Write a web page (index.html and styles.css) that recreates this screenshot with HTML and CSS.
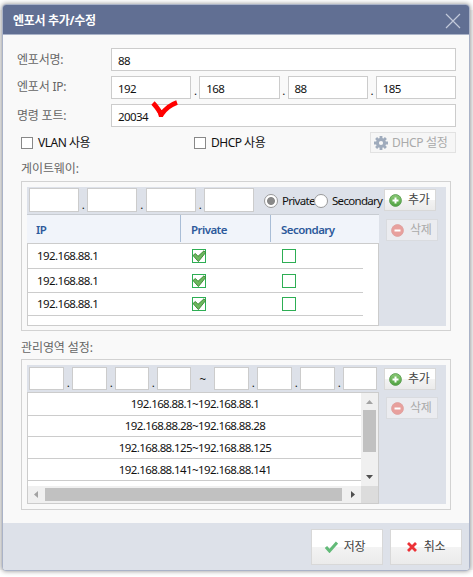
FILE: index.html
```html
<!DOCTYPE html>
<html lang="ko">
<head>
<meta charset="utf-8">
<title>엔포서 추가/수정</title>
<link rel="stylesheet" href="styles.css">
</head>
<body>
<svg class="defs" width="0" height="0" aria-hidden="true">
  <defs>
    <linearGradient id="gr" x1="0" y1="0" x2="0" y2="1"><stop offset="0" stop-color="#8cca78"/><stop offset="1" stop-color="#4fa23f"/></linearGradient>
    <symbol id="tick" viewBox="0 0 14 14"><path d="M1 6.500 3.400 4.500 6 7.300 12 1.800 13.600 3.600 6.400 12.600z" fill="#6cb85e" stroke="#37822f" stroke-width=".9"/></symbol>
    <symbol id="plus" viewBox="0 0 13 13"><circle cx="6.5" cy="6.5" r="5.9" fill="url(#gr)" stroke="#5a9d50" stroke-width=".9"/><path d="M6.5 3.5v6M3.5 6.5h6" stroke="#fff" stroke-width="2"/></symbol>
    <symbol id="minus" viewBox="0 0 13 13"><circle cx="6.5" cy="6.5" r="5.9" fill="#e8a09d" stroke="#dfa19f" stroke-width=".9"/><path d="M3.5 6.5h6" stroke="#fff" stroke-width="2"/></symbol>
  </defs>
</svg>
<div class="dialog">
  <header class="titlebar">
    <h1>엔포서 추가/수정</h1>
    <svg class="close" width="16" height="16" viewBox="0 0 16 16"><path d="M1 1 15 15M15 1 1 15" stroke="#c3c9da" stroke-width="1.2"/></svg>
  </header>
  <main>
    <div class="row"><label>엔포서명:</label><div class="field">88</div></div>
    <div class="row ip"><label>엔포서 IP:</label><div class="field">192</div><i>.</i><div class="field">168</div><i>.</i><div class="field">88</div><i>.</i><div class="field">185</div></div>
    <div class="row"><label>명령 포트:</label><div class="field">20034
      <svg class="mark" width="32" height="22" viewBox="0 0 32 22"><path d="M4 5Q8 9 12.500 16.500Q18 8 28 4.500" fill="none" stroke="#f00" stroke-width="4.600" stroke-linejoin="round"/><path d="M8 12h7l-1 7h-4z" fill="#f00"/></svg></div></div>
    <div class="options">
      <span class="opt"><b class="box"></b>VLAN 사용</span>
      <span class="opt"><b class="box"></b>DHCP 사용</span>
      <div class="button dhcp disabled"><svg width="14" height="14" viewBox="-7 -7 14 14"><circle r="3.600" fill="none" stroke="#9fabbc" stroke-width="3"/><path d="M0-7V-4M0 4V7M-7 0H-4M4 0H7M-4.900-4.900-3-3M3 3 4.900 4.900M4.900-4.900 3-3M-3 3-4.900 4.900" stroke="#9fabbc" stroke-width="2.800"/></svg>DHCP 설정</div>
    </div>
    <h2 class="first">게이트웨이:</h2>
    <section class="group">
      <div class="panel">
        <div class="left">
          <div class="entry gate"><div class="field"></div><i>.</i><div class="field"></div><i>.</i><div class="field"></div><i>.</i><div class="field"></div>
            <span class="radio first-radio"><b class="on"></b>Private</span><span class="radio"><b></b>Secondary</span></div>
          <div class="table">
            <div class="thead"><span>IP</span><span>Private</span><span>Secondary</span></div>
            <div class="tbody">
              <div class="tr"><span>192.168.88.1</span><b><svg width="14" height="14"><use href="#tick"/></svg></b><b></b></div>
              <div class="tr"><span>192.168.88.1</span><b><svg width="14" height="14"><use href="#tick"/></svg></b><b></b></div>
              <div class="tr"><span>192.168.88.1</span><b><svg width="14" height="14"><use href="#tick"/></svg></b><b></b></div>
            </div>
          </div>
        </div>
        <div class="side">
          <div class="button"><svg width="13" height="13"><use href="#plus"/></svg>추가</div>
          <div class="button disabled"><svg width="13" height="13"><use href="#minus"/></svg>삭제</div>
        </div>
      </div>
    </section>
    <h2 class="second">관리영역 설정:</h2>
    <section class="group area">
      <div class="panel">
        <div class="left">
          <div class="entry range"><div class="field"></div><i>.</i><div class="field"></div><i>.</i><div class="field"></div><i>.</i><div class="field"></div><em>~</em><div class="field"></div><i>.</i><div class="field"></div><i>.</i><div class="field"></div><i>.</i><div class="field"></div></div>
          <div class="list">
            <div class="items"><p>192.168.88.1~192.168.88.1</p><p>192.168.88.28~192.168.88.28</p><p>192.168.88.125~192.168.88.125</p><p>192.168.88.141~192.168.88.141</p></div>
            <div class="vbar"><svg width="17" height="17"><path d="M5 11h7L8.500 7z" fill="#a3a3a3"/></svg><div class="thumb"></div><svg width="17" height="17"><path d="M5 6h7L8.500 10z" fill="#505050"/></svg></div>
            <div class="hbar"><svg width="17" height="17"><path d="M10 5v7L6 8.500z" fill="#a3a3a3"/></svg><div class="thumb"></div><svg width="17" height="17"><path d="M7 5v7L11 8.500z" fill="#505050"/></svg></div>
            <div class="corner"></div>
          </div>
        </div>
        <div class="side">
          <div class="button"><svg width="13" height="13"><use href="#plus"/></svg>추가</div>
          <div class="button disabled"><svg width="13" height="13"><use href="#minus"/></svg>삭제</div>
        </div>
      </div>
    </section>
  </main>
  <footer>
    <div class="button big"><svg width="13" height="12" viewBox="0 0 13 12"><path d="M1 6 4.500 10 12 1.500" fill="none" stroke="#62ba78" stroke-width="3"/></svg>저장</div>
    <div class="button big cancel"><svg width="10" height="10" viewBox="0 0 10 10"><path d="M1 1 9 9M9 1 1 9" stroke="#ec3237" stroke-width="2.800"/></svg>취소</div>
  </footer>
</div>
</body>
</html>
```

FILE: styles.css
```css
* { box-sizing: border-box; }
body {
  margin: 0;
  padding: 4px 2px 0;
  width: 473px;
  height: 577px;
  overflow: hidden;
  background: linear-gradient(#fff 0 10px, #f3f3f3 10px 570px, #fff 570px);
  color: #111;
  font: 11.5px/16px "Noto Sans", "Noto Sans CJK KR", sans-serif;
  letter-spacing: -0.6px;
}
svg { display: block; flex: none; }
.defs { position: absolute; }
i, em { font-style: normal; }
.dialog {
  width: 468px;
  height: 567px;
  display: flex;
  flex-direction: column;
  border: 1px solid #aab3c8;
  border-radius: 4px;
  background: #f9f9f9;
  overflow: hidden;
  box-shadow: 0 0 5px rgba(0, 0, 0, .45);
}
.titlebar {
  height: 30px;
  flex: none;
  display: flex;
  align-items: center;
  justify-content: space-between;
  padding: 2px 8px 0 10px;
  background: #616f93;
  border-bottom: 1px solid #aab3c8;
}
h1 { margin: 0; color: #fff; font-size: 12px; font-weight: 700; letter-spacing: -0.3px; }
main { flex: 1; padding: 13px 13px 0 14px; }
.row { display: flex; height: 23px; margin-bottom: 5px; }
.row label { width: 94px; flex: none; color: #666; font-size: 12px; line-height: 24px; letter-spacing: -0.2px; }
.row.ip label { line-height: 22px; }
.field { flex: 1; min-width: 0; border: 1px solid #ccc; background: #fff; padding-left: 6px; line-height: 23px; position: relative; }
.row i { width: 8px; flex: none; text-align: center; line-height: 30px; }
.mark { position: absolute; left: 37px; top: -7px; }
.options { display: flex; height: 21px; padding-left: 4px; }
.opt { display: flex; width: 173px; align-items: center; gap: 5px; font-size: 12px; letter-spacing: -0.5px; }
.box { width: 12px; height: 12px; border: 1px solid #888; background: #fff; }
.button {
  display: flex;
  align-items: center;
  height: 22px;
  width: 52px;
  gap: 6px;
  padding-left: 4px;
  border: 1px solid #d8d8d8;
  background: linear-gradient(#fff 50%, #f3f3f3 50%, #ebebeb);
  color: #444;
  font-size: 12px;
  letter-spacing: -0.3px;
}
.disabled { background: #ebecf0; color: #aaa; border-color: #d9dbdf; }
.dhcp { width: 86px; height: 21px; margin-left: 3px; padding-left: 3px; background: #f6f6f6; border-color: #e2e2e2; flex: none; gap: 4px; }
h2 { margin: 0 0 0 4px; color: #666; font-size: 12px; font-weight: 400; line-height: 16px; letter-spacing: -0.1px; }
.first { margin-top: 8px; margin-bottom: 4px; }
.second { margin-top: 9px; margin-bottom: 3px; }
.group { width: 430px; height: 150px; margin-left: 4px; padding: 5px; border: 1px solid #d2d2d2; }
.area { height: 151px; }
.panel { display: flex; width: 419px; height: 139px; background: #dde1e9; }
.left { width: 352px; flex: none; }
.side { padding: 2px 0 0 5px; }
.side .button + .button { margin: 8px 0 0 2px; }
.area .side { padding-top: 3px; }
.area .side .button + .button { margin-top: 7px; }
.entry { display: grid; height: 27px; padding: 1px 0 0 2px; white-space: nowrap; }
.entry .field { height: 24px; }
.entry i { text-align: center; line-height: 33px; }
.gate { grid-template-columns: 50px 8px 50px 9px 50px 8px 50px 60px 65px; }
.radio { display: flex; align-items: center; gap: 4px; height: 26px; letter-spacing: -0.7px; }
.first-radio { padding-left: 10px; }
.radio b { width: 14px; height: 14px; flex: none; border: 1px solid #999; border-radius: 50%; background: #fff; }
.radio .on { background: radial-gradient(circle, #888 0 3.5px, #fff 4.4px); }
.thead { display: grid; grid-template-columns: 154px 90px 108px; height: 29px; border-top: 1px solid #c8ccd2; background: #f1f4fa; color: #2d5a9b; font-weight: 600; font-size: 11.5px; }
.thead span { height: 27px; line-height: 29px; padding-left: 10px; border-right: 1px solid #a9bdd6; letter-spacing: -0.55px; }
.thead span:first-child { padding-left: 9px; }
.thead span:last-child { border: 0; }
.tbody { height: 83px; padding-right: 15px; border: 1px solid #ccc; background: #fff; }
.tr { display: grid; grid-template-columns: 164px 90px 80px; height: 25px; border-bottom: 1px solid #ccc; align-items: center; }
.tr:nth-child(2) { height: 24px; }
.tr:nth-child(3) { height: 23px; }
.tr span { padding-left: 9px; }
.tr b { width: 14px; height: 14px; border: 1px solid #2dae54; background: #fff; }
.tr b svg { margin: -1px; }
.range { grid-template-columns: 35px 8px 35px 8px 34px 8px 34px 23px 35px 8px 35px 8px 35px 8px 34px; padding-top: 2px; }
.range .field { height: 23px; }
.range i { line-height: 32px; }
.range em { text-align: center; line-height: 24px; }
.list { display: grid; grid-template: 93px 17px / 333px 17px; height: 112px; border: 1px solid #ccc; background: #fff; }
.items p { margin: 0; height: 22px; line-height: 21px; text-align: center; border-bottom: 1px solid #ccc; padding-left: 1px; }
.items p:first-child { height: 23px; line-height: 22px; }
.items p:nth-child(2) { height: 21px; line-height: 20px; }
.vbar, .hbar { display: flex; background: #f0f0f0; }
.vbar { flex-direction: column; justify-content: space-between; }
.vbar .thumb { width: 13px; height: 42px; margin: 0 2px 17px; background: #c1c1c1; }
.hbar .thumb { height: 13px; width: 297px; margin: 2px 2px 0 0; background: #c1c1c1; }
.corner { background: #dcdcdc; }
footer { display: flex; justify-content: flex-end; gap: 7px; height: 47px; flex: none; padding: 6px 7px 0; background: #dde1e9; }
.big { width: 72px; height: 36px; padding: 0 4px 0 0; justify-content: center; }
.cancel { padding-right: 0; gap: 7px; }
```
